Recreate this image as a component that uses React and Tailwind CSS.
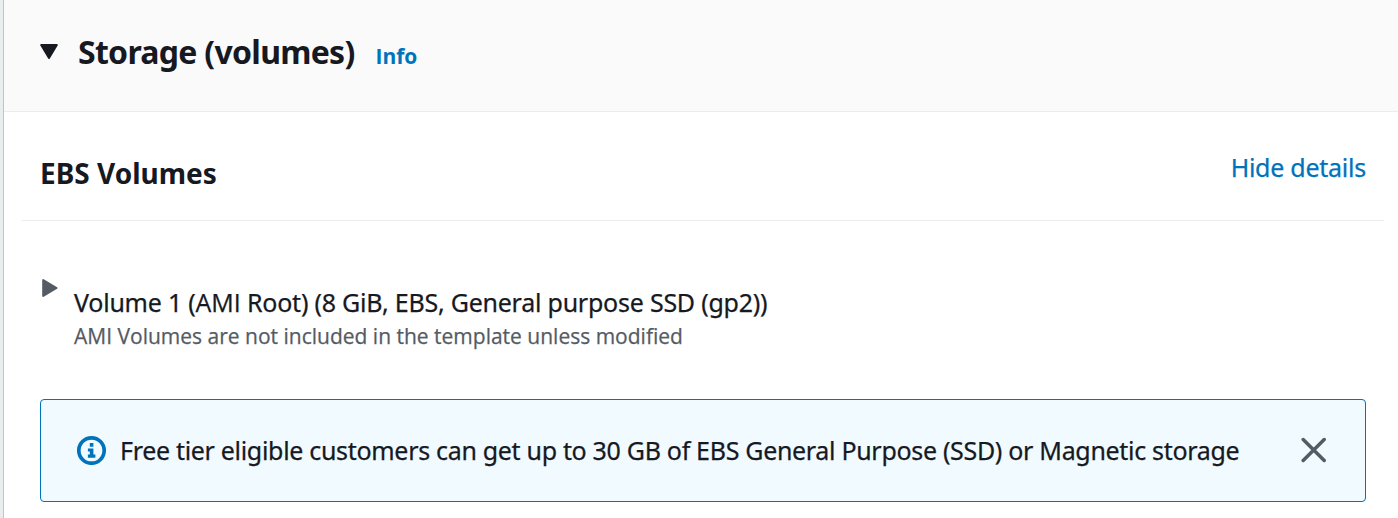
export default function App() {
  return (
    <div className="flex h-[518px] w-[1398px] overflow-hidden whitespace-nowrap bg-[#eaeded] font-['Noto_Sans',sans-serif] text-[#16191f]">
      <main className="ml-[3px] flex-1 border-l border-[#bfc4c4] bg-white">
        <header className="flex h-28 items-start border-b border-[#eaeded] bg-[#fafafa] pl-9">
          <svg className="mt-[43px] h-4 w-[18px]" viewBox="0 0 18 16" fill="currentColor">
            <path d="M1.2 2h15.6L9 15z" stroke="currentColor" strokeWidth="2" strokeLinejoin="round" />
          </svg>
          <h1 className="ml-5 mt-8 text-[32px] font-bold leading-10 tracking-[-0.71px]">Storage (volumes)</h1>
          <a className="ml-[21px] mt-[42px] font-['Open_Sans',sans-serif] text-[21px] font-bold leading-7 tracking-[-0.05px] text-[#0073bb]">Info</a>
        </header>
        <section className="pl-[18px] pr-[14px]">
          <div className="flex h-[109px] items-start justify-between border-b border-[#eaeded] px-[18px]">
            <h2 className="mt-[43px] text-[28px] font-bold leading-9">EBS Volumes</h2>
            <a className="mt-[39px] text-[25px] leading-8 tracking-[-0.25px] text-[#0073bb] [-webkit-text-stroke:0.25px]">Hide details</a>
          </div>
          <div className="flex h-[178px] items-start pl-5">
            <svg className="mt-[57px] h-5 w-4 text-[#545b64]" viewBox="0 0 16 20" fill="currentColor">
              <path d="M1.2 2v16L14.6 10z" stroke="currentColor" strokeWidth="2" strokeLinejoin="round" />
            </svg>
            <div className="ml-4 mt-[64px]">
              <p className="text-[25px] leading-[34px] tracking-[-0.23px] [-webkit-text-stroke:0.25px]">
                Volume 1 (<span className="font-['Open_Sans',sans-serif] tracking-[-0.02px]">AMI</span> Root) (8 GiB, EBS, General purpose SSD (gp2))
              </p>
              <p className="font-['Open_Sans',sans-serif] text-[21px] leading-[34px] text-[#545b64] [-webkit-text-stroke:0.25px]">AMI Volumes are not included in the template unless modified</p>
            </div>
          </div>
          <div className="mx-[18px] flex h-[103px] items-center rounded-[4px] border border-[#0073bb] bg-[#f1faff] pb-px pl-9 pr-[38px]">
            <svg className="h-[30px] w-[30px] text-[#0073bb]" viewBox="0 0 30 30" fill="none">
              <circle cx="14.5" cy="15.5" r="12.7" stroke="currentColor" strokeWidth="3.7" />
              <path d="M12.8 8h3.6v3.7h-3.6zM10.9 13.5h5.5v6.1h2v3.1h-7.5v-3.1h1.9v-3h-1.9z" fill="currentColor" />
            </svg>
            <p className="ml-[13px] text-[25px] leading-8 tracking-[-0.31px] [-webkit-text-stroke:0.25px]">Free tier eligible customers can get up to 30 GB of EBS General Purpose (SSD) or Magnetic storage</p>
            <svg className="mb-px ml-auto h-[26px] w-[26px] text-[#545b64]" viewBox="0 0 26 26" fill="none" stroke="currentColor" strokeWidth="3.5" strokeLinecap="round">
              <path d="M2.2 2.5l21 21M23.2 2.5l-21 21" />
            </svg>
          </div>
        </section>
      </main>
    </div>
  );
}
